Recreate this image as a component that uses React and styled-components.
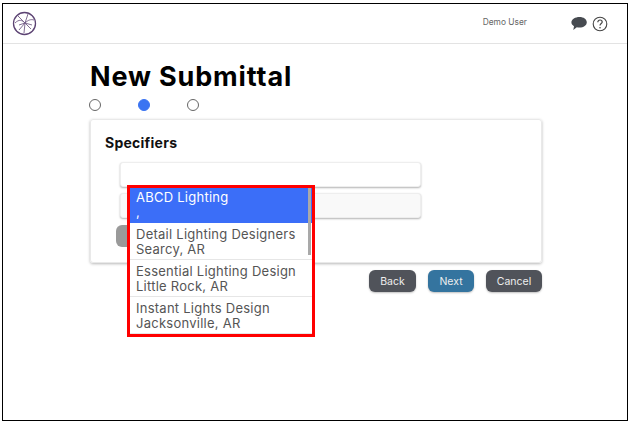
import React from 'react'
import styled, { createGlobalStyle } from 'styled-components'

const Global = createGlobalStyle`
  html, body {
    margin: 0;
    padding: 0;
    background: #fff;
  }
  body {
    font-family: Inter, "Liberation Sans", sans-serif;
  }
`

const Frame = styled.div`
  box-sizing: border-box;
  width: 626px;
  height: 418px;
  margin: 3px 0 0 2px;
  border: 1.5px solid #000;
  background: #fff;
`

const Header = styled.header`
  box-sizing: border-box;
  height: 40px;
  padding: 0 19px 0 9px;
  border-bottom: 1px solid #e3e3e3;
  display: flex;
  align-items: center;
`

const UserName = styled.span`
  margin-left: auto;
  margin-right: 44px;
  margin-top: -3px;
  font-size: 8.4px;
  color: #666;
`

const Icons = styled.div`
  display: flex;
  align-items: center;
  gap: 5px;
`

const Content = styled.main`
  width: 452px;
  margin-left: 87px;
  padding-top: 17px;
`

const Title = styled.h1`
  margin: 0;
  font-size: 27px;
  line-height: 32px;
  font-weight: 700;
  color: #000;
  letter-spacing: 0.85px;
`

const Steps = styled.div`
  display: flex;
  gap: 37px;
  margin: 6px 0 0 -1.5px;
`

const Step = styled.span`
  box-sizing: border-box;
  width: 12px;
  height: 12px;
  border-radius: 50%;
  border: 1px solid ${p => (p.$active ? '#3b74f2' : '#666')};
  background: ${p => (p.$active ? '#3b74f2' : '#fff')};
`

const Card = styled.section`
  position: relative;
  box-sizing: border-box;
  height: 144px;
  margin-top: 8px;
  padding: 14px 14px;
  border: 1px solid #e9e9e9;
  border-radius: 3px;
  box-shadow: 0 1px 3px rgba(0, 0, 0, 0.28);
`

const CardTitle = styled.h2`
  margin: 0 0 11px;
  font-size: 14px;
  line-height: 17px;
  font-weight: 700;
  color: #111;
  letter-spacing: 0.25px;
`

const Field = styled.div`
  box-sizing: border-box;
  width: 301px;
  height: 25px;
  margin: 0 0 6px 15px;
  border: 1px solid #eee;
  border-radius: 3px;
  background: ${p => (p.$muted ? '#f9f9f9' : '#fff')};
  box-shadow: 0 1px 2px rgba(0, 0, 0, 0.3);
`

const GrayButton = styled.div`
  width: 40px;
  height: 22px;
  margin: 7px 0 0 11px;
  border-radius: 6px;
  background: #9a9a9a;
`

const Dropdown = styled.div`
  position: absolute;
  left: 36px;
  top: 65px;
  box-sizing: border-box;
  width: 188px;
  height: 152px;
  border: 3px solid #f00;
  background: #fff;
  overflow: hidden;
`

const Scrollbar = styled.div`
  position: absolute;
  right: 1px;
  top: 0;
  width: 3px;
  height: 67px;
  background: #a9a9a9;
`

const Option = styled.div`
  box-sizing: border-box;
  height: ${p => (p.$selected ? '35px' : '37px')};
  padding: ${p => (p.$selected ? '2px' : '4px')} 6px 0;
  font-size: 13px;
  line-height: 14.5px;
  letter-spacing: 0.25px;
  white-space: nowrap;
  color: ${p => (p.$selected ? '#fff' : '#555')};
  background: ${p => (p.$selected ? '#3b6ef8' : '#fff')};
  border-bottom: ${p => (p.$selected ? '0' : '1px solid #e6e6e6')};
`

const Actions = styled.div`
  display: flex;
  justify-content: flex-end;
  gap: 12px;
  margin-top: 7px;
`

const ActionButton = styled.button`
  box-sizing: border-box;
  width: ${p => p.$width}px;
  height: 22px;
  padding: 0;
  border: 0;
  border-radius: 6px;
  font-family: inherit;
  font-size: 10.5px;
  color: #eee;
  background: ${p => (p.$primary ? '#34749f' : '#50535a')};
  box-shadow: 0 1px 2px rgba(0, 0, 0, 0.25);
`

const Logo = () => (
  <svg width="25" height="25" viewBox="0 0 25 25" fill="none" stroke="#5c4373">
    <circle cx="12.5" cy="12.5" r="11" strokeWidth="1.3" />
    <g strokeWidth="0.9" opacity="0.85">
      <path d="M6 5 L13 12 L12 22" />
      <path d="M3 12 C7 8 10 9 13 12 C16 9 19 8 22 9" />
      <path d="M13 12 L7 19" />
      <path d="M13 12 L19 18" />
      <path d="M13 12 L16 3" />
      <path d="M7 14 L13 12 L20 14" />
    </g>
  </svg>
)

const ChatIcon = () => (
  <svg width="16" height="15" viewBox="0 0 16 15">
    <path
      fill="#464a50"
      d="M8.5 1 C12.6 1 15.8 3.2 15.8 6.3 C15.8 9.4 12.6 11.6 8.5 11.6 C7.5 11.6 6.6 11.5 5.8 11.3 L2.3 14 L3 10.2 C1.3 9.2 0.4 7.9 0.4 6.3 C0.4 3.2 4.4 1 8.5 1 Z"
    />
  </svg>
)

const HelpIcon = () => (
  <svg width="16" height="16" viewBox="0 0 16 16" fill="none" stroke="#444">
    <circle cx="8" cy="8" r="6.8" strokeWidth="1.1" />
    <path d="M5.8 6.2 C5.8 4.8 6.8 4 8 4 C9.3 4 10.2 4.9 10.2 6 C10.2 7.5 8 7.6 8 9.6" strokeWidth="1.2" />
    <circle cx="8" cy="11.7" r="0.8" fill="#444" stroke="none" />
  </svg>
)

const options = [
  { name: 'Detail Lighting Designers', place: 'Searcy, AR' },
  { name: 'Essential Lighting Design', place: 'Little Rock, AR' },
  { name: 'Instant Lights Design', place: 'Jacksonville, AR' },
]

const App = () => {
  return (
    <Frame>
      <Global />
      <Header>
        <Logo />
        <UserName>Demo User</UserName>
        <Icons>
          <ChatIcon />
          <HelpIcon />
        </Icons>
      </Header>
      <Content>
        <Title>New Submittal</Title>
        <Steps>
          <Step />
          <Step $active />
          <Step />
        </Steps>
        <Card>
          <CardTitle>Specifiers</CardTitle>
          <Field />
          <Field $muted />
          <GrayButton />
          <Dropdown>
            <Option $selected>
              ABCD Lighting
              <br />,
            </Option>
            {options.map(o => (
              <Option key={o.name}>
                {o.name}
                <br />
                {o.place}
              </Option>
            ))}
            <Scrollbar />
          </Dropdown>
        </Card>
        <Actions>
          <ActionButton $width={47}>Back</ActionButton>
          <ActionButton $width={46} $primary>Next</ActionButton>
          <ActionButton $width={56}>Cancel</ActionButton>
        </Actions>
      </Content>
    </Frame>
  )
}

export default App
